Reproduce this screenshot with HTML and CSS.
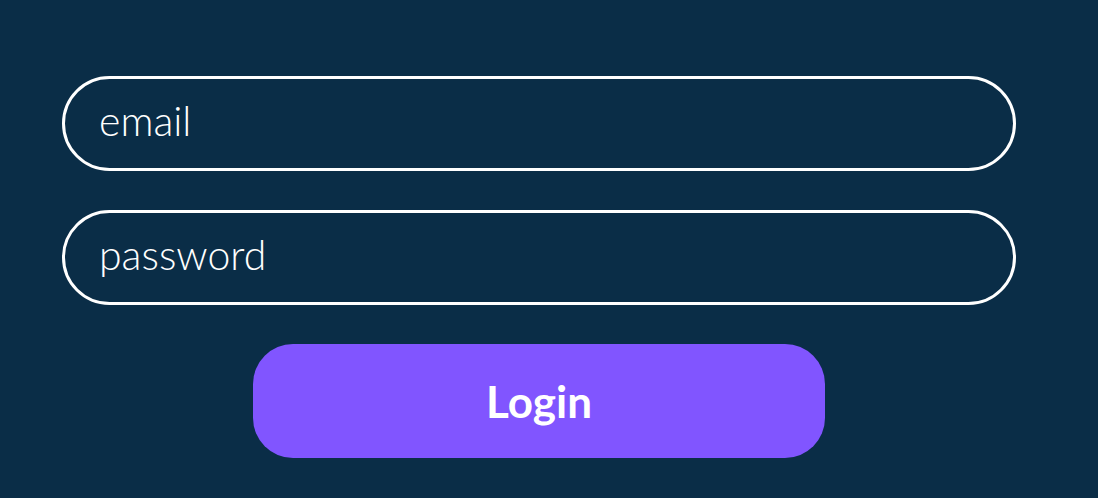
FILE: index.html
```html
<!DOCTYPE html>
<html lang="en">
<head>
    <meta charset="UTF-8">
    <meta name="viewport" content="width=device-width, initial-scale=1.0">
    <title>Login</title>
    <link rel="stylesheet" href="styles.css">
</head>
<body>
    <form class="login-form" onsubmit="return false">
        <input type="text" class="field" placeholder="email">
        <input type="password" class="field" placeholder="password">
        <button type="submit" class="login-btn">Login</button>
    </form>
</body>
</html>
```

FILE: styles.css
```css
* {
    margin: 0;
    padding: 0;
    box-sizing: border-box;
    font-family: Lato, 'Noto Sans', sans-serif;
}

body {
    background-color: #0a2d47;
    height: 100vh;
    padding: 76px 0 0 62px;
}

.login-form {
    width: 954px;
    display: flex;
    flex-direction: column;
    align-items: center;
    gap: 39px;
}

.field {
    width: 100%;
    height: 95px;
    padding: 0 34px 6px;
    border: 3px solid #fff;
    border-radius: 48px;
    background: transparent;
    color: #fff;
    font-size: 41px;
    font-weight: 300;
    outline: none;
}

.field::placeholder {
    color: #fff;
    opacity: 1;
}

.login-btn {
    width: 572px;
    height: 114px;
    border: none;
    border-radius: 40px;
    background-color: #8155ff;
    color: #fff;
    font-size: 44px;
    font-weight: 700;
    cursor: pointer;
}
```
